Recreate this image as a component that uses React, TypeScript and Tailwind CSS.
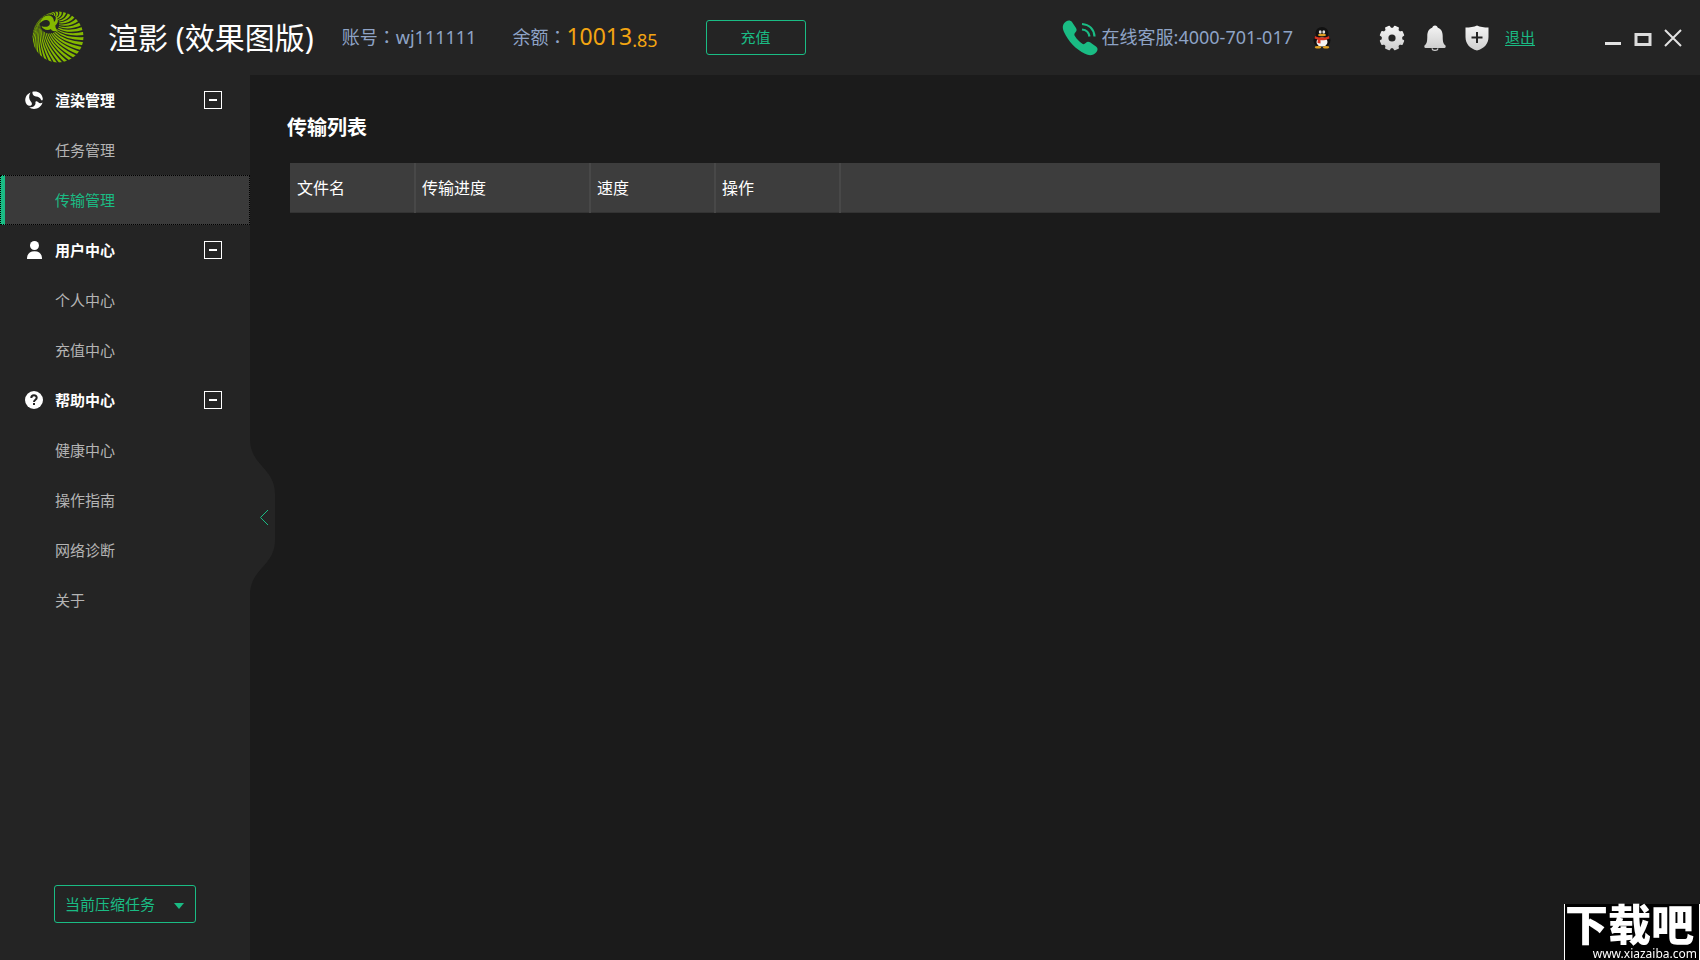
import { useState } from "react";
import type { ReactNode } from "react";

type NavItem = { id: string; label: string };
type NavSection = { title: string; icon: ReactNode; items: NavItem[] };

const point = (cx: number, cy: number, r: number, deg: number) => {
  const a = (deg * Math.PI) / 180;
  return `${(cx + r * Math.cos(a)).toFixed(2)} ${(cy + r * Math.sin(a)).toFixed(2)}`;
};

// Blades fan out from the small eye to the rim of the big circle
const BLADES = Array.from({ length: 32 }, (_, i) => {
  const a = i * 11.25;
  return [
    `M${point(18, 13, 9, a + 46)}`,
    `Q${point(20, 18, 17, a + 34)} ${point(26, 26, 27, a)}`,
    `L${point(26, 26, 27, a + 7)}`,
    `Q${point(20, 18, 17, a + 41)} ${point(18, 13, 9, a + 52)}Z`,
  ].join("");
}).join("");

const GEAR = Array.from({ length: 8 }, (_, i) => {
  const a = i * 45 + 22.5;
  return `${i === 0 ? "M" : "L"}${point(13, 13, 9.6, a - 14)}L${point(13, 13, 11.8, a - 9)}L${point(13, 13, 11.8, a + 9)}L${point(13, 13, 9.6, a + 14)}`;
}).join("");

function Logo() {
  return (
    <svg className="w-[52px] h-[52px] mb-[2px]" viewBox="0 0 52 52" aria-hidden="true">
      <defs>
        <clipPath id="logo-clip">
          <circle cx="26" cy="26" r="25.5" />
        </clipPath>
      </defs>
      <g clipPath="url(#logo-clip)">
        <path d={BLADES} fill="#84b800" />
        <circle cx="17.500" cy="13" r="9.600" fill="#242424" />
      </g>
      <path
        d="M8 12C9 7 13 4 17 4.500C20.500 5 22 8 22 11C23.800 9.500 24.300 7 23.300 4C27 8 26.500 12 23.300 14.500C23.300 17 24.500 18.500 26 19.500C22 21 19.500 20 19 18C15.500 20 10.500 18.500 9.500 15C12.500 16.500 16 16 17.500 14C18.500 11.500 17.500 9.500 15 9C12 8.500 10 10 8 12Z"
        fill="#84b800"
      />
    </svg>
  );
}

function PhoneIcon() {
  return (
    <svg className="w-9 h-9" viewBox="0 0 36 36" aria-hidden="true">
      <path
        d="M4 1.500C6 0 8.500 0 10 2L14 8C15 9.700 14.800 11 13.500 12.200C12.200 13.500 12 14.600 13 16.200C15 19.200 17.300 21.600 20 23.600C21.400 24.500 22.500 24.300 23.700 23C25 21.500 26.500 21.300 28 22.300L34 26.500C36 28 36 30 34.500 32C31 36 27 35.800 23 33.800C14 29.500 6 21 2 12C0 7.500 0.500 4 4 1.500Z"
        fill="#1abc84"
      />
      <path
        d="M20 4C27.500 4.500 32 9.500 32.500 16.500M20 9.500C24.500 10 27 12.500 27.500 16.500"
        fill="none"
        stroke="#1abc84"
        strokeWidth="2.200"
      />
    </svg>
  );
}

function PenguinIcon() {
  return (
    <svg className="w-[18px] h-[22px]" viewBox="0 0 18 22" aria-hidden="true">
      <ellipse cx="9" cy="13.500" rx="8.500" ry="7" fill="#111" />
      <ellipse cx="9" cy="6" rx="6.500" ry="6" fill="#111" />
      <ellipse cx="9" cy="15" rx="5.500" ry="4.500" fill="#f4f4f4" />
      <ellipse cx="7.200" cy="5" rx="1.400" ry="1.800" fill="#ddd" />
      <ellipse cx="10.800" cy="5" rx="1.400" ry="1.800" fill="#ddd" />
      <ellipse cx="9" cy="8" rx="4" ry="1.200" fill="#dfa022" />
      <path d="M2 9C6 11 12 11 16 9L16.500 11.500C12 13.500 9 13.500 7.500 13V16.500L4.500 16L4.800 12.500L1.500 11.500Z" fill="#d8331f" />
      <ellipse cx="5" cy="20.300" rx="3.200" ry="1.300" fill="#dfa022" />
      <ellipse cx="13" cy="20.300" rx="3.200" ry="1.300" fill="#dfa022" />
    </svg>
  );
}

function RenderIcon() {
  return (
    <svg className="w-[18px] h-[18px]" viewBox="0 0 18 18" fill="#fff" aria-hidden="true">
      <path d="M7.500 0.800C12 -0.600 17 2 17.800 7.500C17.800 9.500 17 10 16 8.800C15 6.500 13.500 5.800 11 5.500C8.500 5 7 3 7.500 0.800Z" />
      <path d="M5.500 1.500C2 3 0 6 0.300 10C0.800 13.500 3.500 15.800 6 14.500C7.500 13.500 7 12 5.800 10.500C3.800 8 3.500 5 5.500 1.500Z" />
      <path d="M4 16.500C9 19.500 16 17.500 17.500 11.500C16 12.500 14.500 12.500 13 11C11.500 9.500 10 10.500 10.500 12C10.800 14.500 8 16.800 4 16.500Z" />
    </svg>
  );
}

function UserIcon() {
  return (
    <svg className="w-[18px] h-[18px]" viewBox="0 0 18 18" fill="#fff" aria-hidden="true">
      <circle cx="9.500" cy="4.500" r="4.500" />
      <path d="M2 18C2 13 4.500 10.200 9.500 10.200S17 13 17 18Z" />
    </svg>
  );
}

function HelpIcon() {
  return (
    <svg className="w-[18px] h-[18px]" viewBox="0 0 18 18" aria-hidden="true">
      <circle cx="9" cy="9" r="9" fill="#fff" />
      <path d="M6.300 7C6.300 3.400 11.700 3.500 11.700 6.700C11.700 8.700 9 8.700 9 11" fill="none" stroke="#242424" strokeWidth="2" />
      <rect x="8" y="12" width="2" height="2" fill="#242424" />
    </svg>
  );
}

function ToolIcons() {
  return (
    <div className="flex items-center gap-4">
      <button type="button" aria-label="设置">
        <svg className="block w-[26px] h-[26px]" viewBox="0 0 26 26">
          <defs>
            <linearGradient id="silver" x1="0" y1="0" x2="0" y2="1">
              <stop offset="0" stopColor="#f5f5f5" />
              <stop offset="1" stopColor="#cfcfcf" />
            </linearGradient>
          </defs>
          <path d={`${GEAR}Z`} fill="url(#silver)" stroke="url(#silver)" strokeWidth="1.500" strokeLinejoin="round" />
          <circle cx="13" cy="13" r="3.600" fill="#242424" />
        </svg>
      </button>
      <button type="button" aria-label="消息">
        <svg className="block w-[26px] h-[26px]" viewBox="0 0 26 26" fill="url(#silver)">
          <path d="M14 0.500C15.700 0.500 16.500 1.500 16.800 2.800C20.300 4 21.700 7 21.700 11C21.700 16 22 18.500 24.500 20.500C25 22 24.500 23 23.500 23H4.500C3.500 23 3 22 3.500 20.500C6 18.500 6.300 16 6.300 11C6.300 7 7.700 4 11.200 2.800C11.500 1.500 12.300 0.500 14 0.500Z" />
          <path d="M11 23.300C11.500 26 16.500 26 17 23.300" fill="none" stroke="#ccc" strokeWidth="1.200" />
        </svg>
      </button>
      <button type="button" aria-label="安全">
        <svg className="block w-[26px] h-[26px]" viewBox="0 0 26 26">
          <path d="M14 0.500C17 2 21 2.500 25.500 2.500V12C25.500 19 21 23.500 14 25.500C7 23.500 2.500 19 2.500 12V2.500C7 2.500 11 2 14 0.500Z" fill="url(#silver)" />
          <path d="M14 7V18M8.500 12.500H19.500" stroke="#242424" strokeWidth="2" />
        </svg>
      </button>
      <a href="#logout" className="text-[15px] text-[#1abc84] underline underline-offset-2">
        退出
      </a>
    </div>
  );
}

function WindowControls() {
  return (
    <div className="flex items-center gap-3">
      <button type="button" aria-label="最小化">
        <svg className="block w-[18px] h-[18px]" viewBox="0 0 18 18">
          <path d="M1 14.500H17" stroke="#e2e2e2" strokeWidth="3" />
        </svg>
      </button>
      <button type="button" aria-label="最大化">
        <svg className="block w-[18px] h-[18px]" viewBox="0 0 18 18">
          <rect x="2" y="5.500" width="14" height="10" fill="none" stroke="#dcdcdc" strokeWidth="3" />
        </svg>
      </button>
      <button type="button" aria-label="关闭">
        <svg className="block w-[18px] h-[18px]" viewBox="0 0 18 18">
          <path d="M1 1L17 17M17 1L1 17" stroke="#e2e2e2" strokeWidth="2" />
        </svg>
      </button>
    </div>
  );
}

// The SC face puts the full-width colon at the left, the TC face centres it
function Colon() {
  return <span className="font-['Noto_Sans_CJK_TC',sans-serif]">：</span>;
}

function Header() {
  return (
    <header className="flex items-center h-[75px] pl-8 pr-[18px] bg-[#242424] whitespace-nowrap">
      <Logo />
      <h1 className="ml-6 text-[30px] leading-10 text-white">渲影 (效果图版)</h1>
      <div className="flex items-center ml-7 pb-[2px] text-lg text-[#8ea3c6]">
        <span>
          账号<Colon />wj111111
        </span>
        <span className="ml-9">
          余额<Colon />
        </span>
        <span className="text-[23px] text-[#f3a512]">
          10013<span className="relative top-[2px] text-lg">.85</span>
        </span>
      </div>
      <button
        type="button"
        className="w-[100px] h-[35px] ml-12 border border-[#1abc84] rounded-[3px] text-[15px] text-[#1abc84]"
      >
        充值
      </button>
      <div className="flex items-center ml-auto">
        <PhoneIcon />
        <span className="ml-1 pb-[2px] text-lg text-[#8ea3c6]">在线客服:4000-701-017</span>
        <button type="button" className="ml-5 mr-12" aria-label="QQ">
          <PenguinIcon />
        </button>
        <ToolIcons />
        <div className="w-[69px]" />
        <WindowControls />
      </div>
    </header>
  );
}

const sections: NavSection[] = [
  {
    title: "渲染管理",
    icon: <RenderIcon />,
    items: [
      { id: "tasks", label: "任务管理" },
      { id: "transfer", label: "传输管理" },
    ],
  },
  {
    title: "用户中心",
    icon: <UserIcon />,
    items: [
      { id: "profile", label: "个人中心" },
      { id: "recharge", label: "充值中心" },
    ],
  },
  {
    title: "帮助中心",
    icon: <HelpIcon />,
    items: [
      { id: "health", label: "健康中心" },
      { id: "guide", label: "操作指南" },
      { id: "network", label: "网络诊断" },
      { id: "about", label: "关于" },
    ],
  },
];

function Sidebar() {
  const [active, setActive] = useState("transfer");
  const [closed, setClosed] = useState<string[]>([]);

  const toggle = (title: string) => {
    setClosed((prev) => (prev.includes(title) ? prev.filter((t) => t !== title) : [...prev, title]));
  };

  return (
    <aside className="relative flex flex-col w-[250px] shrink-0 bg-[#242424] text-[15px]">
      <nav>
        {sections.map((section) => {
          const open = !closed.includes(section.title);
          return (
            <div key={section.title}>
              <button
                type="button"
                aria-expanded={open}
                onClick={() => toggle(section.title)}
                className="flex items-center w-full h-[50px] pl-[25px] pr-7 font-bold text-white"
              >
                {section.icon}
                <span className="ml-3">{section.title}</span>
                <span className="flex items-center justify-center w-[18px] h-[18px] ml-auto border border-white">
                  <span className="w-2 h-[2px] bg-white" />
                </span>
              </button>
              {open &&
                section.items.map((item) => (
                  <a
                    key={item.id}
                    href={`#${item.id}`}
                    onClick={() => setActive(item.id)}
                    className={
                      item.id === active
                        ? "flex items-center h-[50px] pl-[50px] border-l-[5px] border-[#1abc84] bg-[#3a3a3a] text-[#1abc84] outline-1 -outline-offset-1 outline-dotted outline-black"
                        : "flex items-center h-[50px] pl-[55px] text-[#b4b4b4]"
                    }
                  >
                    {item.label}
                  </a>
                ))}
            </div>
          );
        })}
      </nav>
      <div className="relative w-[142px] mt-auto mb-[37px] ml-[54px]">
        <select
          aria-label="当前压缩任务"
          className="block w-full h-[38px] px-[10px] appearance-none border border-[#1abc84] rounded-[3px] bg-[#242424] text-[#1abc84]"
        >
          <option>当前压缩任务</option>
        </select>
        <svg className="absolute right-3 top-[18px] w-[10px] h-[6px] pointer-events-none" viewBox="0 0 10 6">
          <path d="M0 0H10L5 6Z" fill="#1abc84" />
        </svg>
      </div>
      {/* Collapse handle sticking out of the sidebar */}
      <button type="button" aria-label="收起" className="absolute left-full top-[365px]">
        <svg className="block w-[25px] h-[154px]" viewBox="0 0 25 154">
          <path d="M0 0C1 26 25 28 25 54V100C25 126 1 128 0 154Z" fill="#242424" />
          <path d="M18 70L10.500 77.500L18 85" fill="none" stroke="#1abc84" strokeWidth="1" />
        </svg>
      </button>
    </aside>
  );
}

function TransferList() {
  return (
    <main className="flex-1 min-w-0 pt-9 pl-[37px] pr-10">
      <h2 className="pt-[1px] text-xl leading-8 font-bold text-white">传输列表</h2>
      <div className="pt-[19px] pl-[3px]">
        <table className="w-full table-fixed border-collapse bg-[#3d3d3d] text-base text-white">
          <thead>
            <tr className="h-[49px] border-b border-[#333333] text-left">
              <th className="w-[125px] pl-[7px] pt-[2px] font-normal border-r-2 border-r-[#484848]">文件名</th>
              <th className="w-[175px] pl-[6px] pt-[2px] font-normal border-r-2 border-r-[#484848]">传输进度</th>
              <th className="w-[125px] pl-[6px] pt-[2px] font-normal border-r-2 border-r-[#484848]">速度</th>
              <th className="w-[125px] pl-[6px] pt-[2px] font-normal border-r-2 border-r-[#484848]">操作</th>
              <th />
            </tr>
          </thead>
        </table>
      </div>
    </main>
  );
}

function SiteBadge() {
  return (
    <div className="fixed right-0 bottom-0 flex flex-col justify-between w-[136px] h-14 border-x border-white bg-black text-white whitespace-nowrap">
      <span className="text-[43px] leading-9 font-black font-['Noto_Sans_CJK_SC',sans-serif]">下载吧</span>
      <span className="self-end pr-[2px] text-xs leading-3">www.xiazaiba.com</span>
    </div>
  );
}

export default function App() {
  return (
    <div className="flex flex-col min-h-screen bg-[#1b1b1b] font-['Noto_Sans','Noto_Sans_CJK_SC',sans-serif]">
      <Header />
      <div className="flex flex-1">
        <Sidebar />
        <TransferList />
      </div>
      <SiteBadge />
    </div>
  );
}
